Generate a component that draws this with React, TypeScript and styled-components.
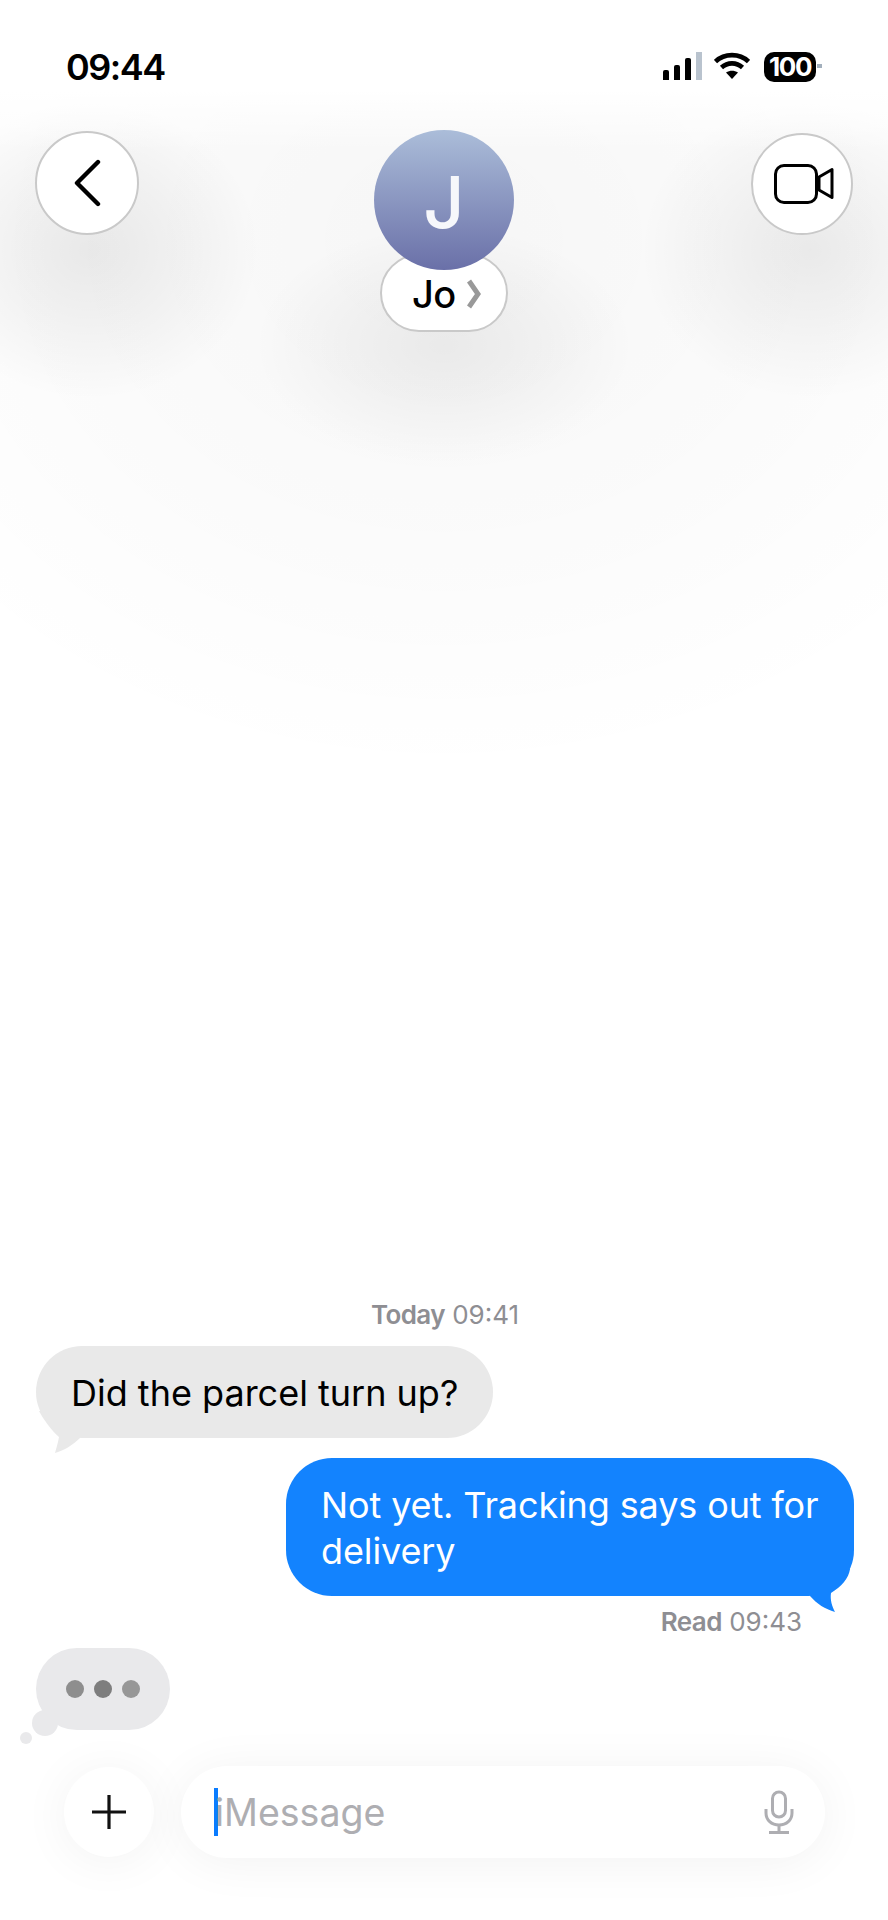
import React from 'react';
import styled, { createGlobalStyle } from 'styled-components';

const GlobalStyle = createGlobalStyle`
  html, body {
    margin: 0;
    padding: 0;
    background: #fff;
  }
  * {
    box-sizing: border-box;
  }
`;

const Screen = styled.div`
  position: relative;
  display: flex;
  flex-direction: column;
  width: 888px;
  height: 1920px;
  overflow: hidden;
  font-family: Inter, 'Liberation Sans', sans-serif;
  color: #000;
  background:
    linear-gradient(#fff 90px, rgba(255, 255, 255, 0) 150px),
    radial-gradient(ellipse 170px 150px at 90px 250px, rgba(0, 0, 0, 0.075), rgba(0, 0, 0, 0.04) 50%, rgba(0, 0, 0, 0)),
    radial-gradient(ellipse 170px 150px at 810px 250px, rgba(0, 0, 0, 0.07), rgba(0, 0, 0, 0.035) 50%, rgba(0, 0, 0, 0)),
    radial-gradient(ellipse 190px 120px at 444px 345px, rgba(0, 0, 0, 0.06), rgba(0, 0, 0, 0.03) 50%, rgba(0, 0, 0, 0)),
    radial-gradient(ellipse 660px 540px at 444px 240px, rgba(0, 0, 0, 0.035), rgba(0, 0, 0, 0.014) 60%, rgba(0, 0, 0, 0)),
    #fff;
`;

const StatusBar = styled.div`
  display: flex;
  align-items: flex-start;
  justify-content: space-between;
  height: 131px;
  padding: 45px 66px 0 66px;
`;

const Clock = styled.div`
  font-size: 36px;
  font-weight: 600;
  line-height: 44px;
  letter-spacing: -1.5px;
`;

const StatusIcons = styled.div`
  display: flex;
  align-items: flex-start;
  padding-top: 7px;
`;

const Signal = styled.div`
  display: flex;
  align-items: flex-end;
  gap: 5px;
  height: 28px;
  margin-right: 12px;
`;

const SignalBar = styled.span<{ $h: number; $off?: boolean }>`
  display: block;
  width: 6px;
  height: ${(p) => p.$h}px;
  border-radius: ${(p) => (p.$off ? 0 : '2px 2px 0 0')};
  background: ${(p) => (p.$off ? '#b9c3ce' : '#000')};
`;

const Battery = styled.div`
  width: 52px;
  height: 30px;
  margin-left: 14px;
  border-radius: 10px;
  background: #000;
  color: #fff;
  font-size: 26px;
  font-weight: 700;
  line-height: 30px;
  letter-spacing: -1.4px;
  text-align: center;
`;

const BatteryCap = styled.span`
  width: 5px;
  height: 4px;
  margin: 12px 0 0 1px;
  background: #a3b0bd;
`;

const Header = styled.header`
  display: flex;
  align-items: flex-start;
  justify-content: space-between;
  padding: 0 35px;
`;

const RoundButton = styled.div<{ $size: number; $top?: number }>`
  display: flex;
  align-items: center;
  justify-content: center;
  width: ${(p) => p.$size}px;
  height: ${(p) => p.$size}px;
  margin-top: ${(p) => p.$top || 0}px;
  border: 2.5px solid #c9c9c9;
  border-radius: 50%;
  background: #fff;
`;

const VideoIcon = styled.svg`
  margin-left: 3px;
`;

const Contact = styled.div`
  display: flex;
  flex-direction: column;
  align-items: center;
  margin: -1px 2px 0 0;
`;

const Avatar = styled.div`
  position: relative;
  z-index: 1;
  width: 140px;
  height: 140px;
  border-radius: 50%;
  background: linear-gradient(#abbdd9, #6a70a8);
  color: #f6f7fb;
  font-size: 72px;
  font-weight: 500;
  line-height: 144px;
  text-align: center;
`;

const NamePill = styled.div`
  display: flex;
  align-items: center;
  gap: 11px;
  width: 128px;
  height: 78px;
  margin-top: -16px;
  padding: 2px 0 0 30px;
  border: 2.5px solid #c9c9c9;
  border-radius: 39px;
  background: #fff;
  font-size: 38px;
  font-weight: 500;
  letter-spacing: -0.5px;
`;

const Thread = styled.main`
  display: flex;
  flex-direction: column;
  margin-top: auto;
  padding: 0 34px 36px 36px;
`;

const Stamp = styled.div<{ $right?: boolean }>`
  color: #8e8e93;
  font-size: 26px;
  line-height: 30px;
  text-align: ${(p) => (p.$right ? 'right' : 'center')};
  padding-right: ${(p) => (p.$right ? '52px' : 0)};
  margin-top: ${(p) => (p.$right ? '11px' : 0)};
  margin-bottom: ${(p) => (p.$right ? '11px' : '16px')};
  b {
    font-weight: 600;
    letter-spacing: -0.6px;
  }
`;

const Bubble = styled.div<{ $sent?: boolean }>`
  position: relative;
  align-self: ${(p) => (p.$sent ? 'flex-end' : 'flex-start')};
  width: ${(p) => (p.$sent ? '568px' : 'auto')};
  margin-bottom: ${(p) => (p.$sent ? 0 : '20px')};
  padding: 24px ${(p) => (p.$sent ? '30px' : '35px')} 22px 35px;
  border-radius: 46px;
  background: ${(p) => (p.$sent ? '#1383fe' : '#e9e9e9')};
  color: ${(p) => (p.$sent ? '#fff' : '#000')};
  font-size: 36px;
  line-height: 46px;
  letter-spacing: ${(p) => (p.$sent ? '-0.12px' : 0)};
`;

const Tail = styled.svg<{ $sent?: boolean }>`
  position: absolute;
  bottom: -18px;
  left: ${(p) => (p.$sent ? 'auto' : '-1px')};
  right: ${(p) => (p.$sent ? '-1px' : 'auto')};
  width: 50px;
  height: 50px;
  fill: ${(p) => (p.$sent ? '#1383fe' : '#e9e9e9')};
`;

const Typing = styled.div`
  position: relative;
  display: flex;
  align-items: center;
  gap: 10px;
  align-self: flex-start;
  width: 134px;
  height: 82px;
  padding-left: 30px;
  border-radius: 41px;
  background: #e9e9eb;
`;

const Dot = styled.span<{ $shade: string }>`
  width: 18px;
  height: 18px;
  border-radius: 50%;
  background: ${(p) => p.$shade};
`;

const ThoughtDot = styled.span<{ $size: number; $left: number; $bottom: number }>`
  position: absolute;
  left: ${(p) => p.$left}px;
  bottom: ${(p) => p.$bottom}px;
  width: ${(p) => p.$size}px;
  height: ${(p) => p.$size}px;
  border-radius: 50%;
  background: #e9e9eb;
`;

const Composer = styled.footer`
  display: flex;
  align-items: center;
  gap: 27px;
  padding: 0 63px 62px 64px;
`;

const PlusButton = styled.div`
  display: flex;
  align-items: center;
  justify-content: center;
  flex: none;
  width: 90px;
  height: 90px;
  border-radius: 50%;
  background: #fff;
  box-shadow: 0 4px 50px rgba(0, 0, 0, 0.055);
`;

const InputField = styled.div`
  display: flex;
  flex: 1;
  align-items: center;
  height: 92px;
  padding: 0 31px 0 33px;
  border-radius: 46px;
  background: #fff;
  box-shadow: 0 4px 50px rgba(0, 0, 0, 0.055);
`;

const Caret = styled.span`
  flex: none;
  width: 4px;
  height: 48px;
  margin-right: -3px;
  background: #0a7cff;
`;

const Placeholder = styled.span`
  flex: 1;
  color: #aeaeb2;
  font-size: 37.5px;
`;

export default function App() {
  return (
    <Screen>
      <GlobalStyle />
      <StatusBar>
        <Clock>09:44</Clock>
        <StatusIcons>
          <Signal>
            <SignalBar $h={10} />
            <SignalBar $h={15} />
            <SignalBar $h={22} />
            <SignalBar $h={28} $off />
          </Signal>
          <svg width="36" height="28" viewBox="0 0 36 28" fill="none">
            <path d="M1.5 9.5C10.5 1 25.5 1 34.5 9.5" stroke="#000" strokeWidth="4.6" />
            <path d="M7.5 15.5C13.5 10 22.5 10 28.5 15.5" stroke="#000" strokeWidth="4.6" />
            <path d="M12 20.5L18 27L24 20.5C20 18 16 18 12 20.5Z" fill="#000" />
          </svg>
          <Battery>100</Battery>
          <BatteryCap />
        </StatusIcons>
      </StatusBar>

      <Header>
        <RoundButton $size={104}>
          <svg width="28" height="48" viewBox="0 0 28 48" fill="none">
            <path d="M25 3L4 24L25 45" stroke="#000" strokeWidth="4.4" strokeLinecap="round" strokeLinejoin="round" />
          </svg>
        </RoundButton>
        <Contact>
          <Avatar>J</Avatar>
          <NamePill>
            Jo
            <svg width="14" height="30" viewBox="0 0 14 30" fill="none">
              <path d="M2 2L11 15L2 28" stroke="#999" strokeWidth="5" />
            </svg>
          </NamePill>
        </Contact>
        <RoundButton $size={102} $top={2}>
          <VideoIcon width="60" height="40" viewBox="0 0 60 40" fill="none" stroke="#000" strokeWidth="3">
            <rect x="1.5" y="1.5" width="41" height="37" rx="8.5" />
            <path d="M58 5.5V33.5L45 26V13Z" strokeLinejoin="round" />
          </VideoIcon>
        </RoundButton>
      </Header>

      <Thread>
        <Stamp>
          <b>Today</b> 09:41
        </Stamp>
        <Bubble>
          Did the parcel turn up?
          <Tail viewBox="0 0 50 50">
            <path d="M4 5C9 14 16 24 24 31C23 37 21 43 20 47C28 45 38 39 45 32L45 5Z" />
          </Tail>
        </Bubble>
        <Bubble $sent>
          Not yet. Tracking says out for delivery
          <Tail $sent viewBox="0 0 50 50">
            <path d="M45 5C44 14 36 23 26 29C25 36 27 42 30 48C20 45 12 40 5 32L5 5Z" />
          </Tail>
        </Bubble>
        <Stamp $right>
          <b>Read</b> 09:43
        </Stamp>
        <Typing>
          <Dot $shade="#8e8e8e" />
          <Dot $shade="#7e7e7e" />
          <Dot $shade="#979797" />
          <ThoughtDot $size={26} $left={-4} $bottom={-6} />
          <ThoughtDot $size={12} $left={-16} $bottom={-14} />
        </Typing>
      </Thread>

      <Composer>
        <PlusButton>
          <svg width="36" height="36" viewBox="0 0 36 36" fill="none" stroke="#111" strokeWidth="3.2">
            <path d="M18 1V35M1 18H35" />
          </svg>
        </PlusButton>
        <InputField>
          <Caret />
          <Placeholder>iMessage</Placeholder>
          <svg width="30" height="44" viewBox="0 0 30 44" fill="none" stroke="#aeaeb2" strokeWidth="3">
            <rect x="8.5" y="2" width="13" height="25" rx="6.5" />
            <path d="M2 19V23C2 30 7.5 35 15 35C22.5 35 28 30 28 23V19" />
            <path d="M15 35V42M5 42.5H25" />
          </svg>
        </InputField>
      </Composer>
    </Screen>
  );
}
